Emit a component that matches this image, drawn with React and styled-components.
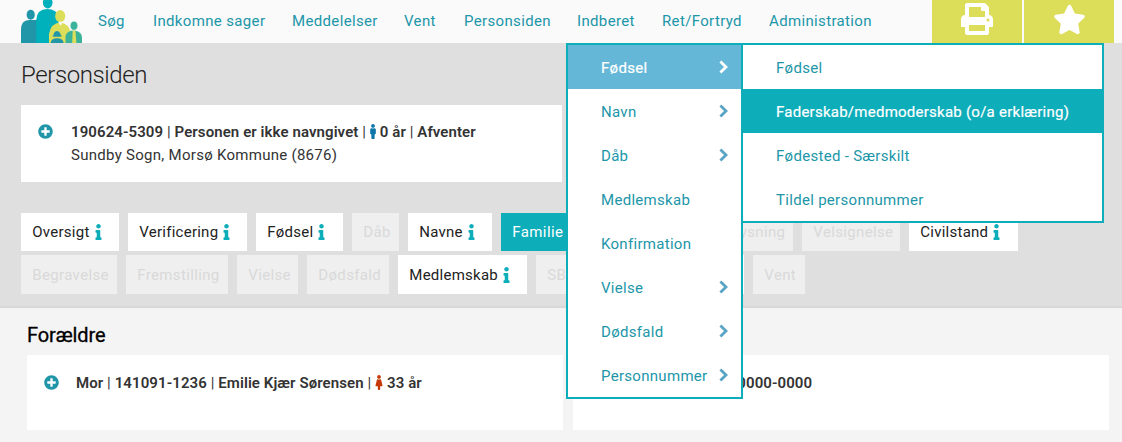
import React from "react";
import styled, { createGlobalStyle, css } from "styled-components";
import { FaInfo, FaMale, FaFemale, FaPlusCircle, FaPrint, FaStar } from "react-icons/fa";

const TEAL = "#0dadba";
const LINK = "#2196a9";

const GlobalStyle = createGlobalStyle`
  * {
    box-sizing: border-box;
  }
  body {
    margin: 0;
    background: #f4f4f4;
    color: #333;
    font-family: Roboto, "Liberation Sans", sans-serif;
    font-size: 15px;
    overflow: hidden;
  }
`;

const navItems = [
  { label: "Søg", width: 55 },
  { label: "Indkomne sager", width: 139 },
  { label: "Meddelelser", width: 112 },
  { label: "Vent", width: 60 },
  { label: "Personsiden", width: 113 },
  { label: "Indberet", width: 85 },
  { label: "Ret/Fortryd", width: 107 },
  { label: "Administration", width: 163 },
];

const menuItems = [
  { label: "Fødsel", sub: true, active: true },
  { label: "Navn", sub: true },
  { label: "Dåb", sub: true },
  { label: "Medlemskab" },
  { label: "Konfirmation" },
  { label: "Vielse", sub: true },
  { label: "Dødsfald", sub: true },
  { label: "Personnummer", sub: true },
];

const subItems = [
  { label: "Fødsel" },
  { label: "Faderskab/medmoderskab (o/a erklæring)", active: true },
  { label: "Fødested - Særskilt" },
  { label: "Tildel personnummer" },
];

const tabRows = [
  [
    { label: "Oversigt", width: 98, info: true },
    { label: "Verificering", width: 119, info: true },
    { label: "Fødsel", width: 87, info: true },
    { label: "Dåb", width: 47, disabled: true },
    { label: "Navne", width: 84, info: true },
    { label: "Familie", width: 87, info: true, active: true },
    { label: "", width: 115, disabled: true },
    { label: "Lysning", width: 72, disabled: true },
    { label: "Velsignelse", width: 98, disabled: true },
    { label: "Civilstand", width: 109, info: true },
  ],
  [
    { label: "Begravelse", width: 96, disabled: true },
    { label: "Fremstilling", width: 102, disabled: true },
    { label: "Vielse", width: 61, disabled: true },
    { label: "Dødsfald", width: 82, disabled: true },
    { label: "Medlemskab", width: 129, info: true },
    { label: "SB", width: 90, disabled: true },
    { label: "", width: 109 },
    { label: "Vent", width: 52, disabled: true },
  ],
];

function Logo() {
  return (
    <LogoSvg viewBox="0 0 61 43">
      <ellipse cx="9.7" cy="14.8" rx="4.1" ry="5" fill="#2196a9" />
      <path d="M0 43V30Q0 20 8 20H16V43Z" fill="#2196a9" />
      <ellipse cx="26.7" cy="2.6" rx="4.8" ry="6" fill="#00b0bb" />
      <path d="M15.2 43V20Q16 9 26 9Q36 9 38.5 18V43Z" fill="#00b0bb" />
      <path d="M28 43V34Q30 23 39 22.5Q48 23 50 34V43Z" fill="#dcdd58" />
      <ellipse cx="39.2" cy="16.2" rx="5" ry="6.2" fill="#dcdd58" />
      <path d="M37 21.8h5l-2.3 4z" fill="#fafafa" />
      <path d="M44.5 43V36Q46 30.5 53 30.5Q61 31 61 38V43Z" fill="#3bb39b" />
      <path d="M51.7 30.5h2.7l1 12.5h-4.2z" fill="#dcdd58" />
      <ellipse cx="53" cy="25.7" rx="3.8" ry="4.5" fill="#3bb39b" stroke="#fafafa" strokeWidth=".5" />
      <path d="M29.6 43Q30 38.5 36 38.3Q42.5 38.5 42.6 43Z" fill="#2196a9" />
      <path d="M31 36.2Q33 35.8 32.8 33.5Q33.5 31 36 31Q38.7 31 39.3 33.5Q39.5 35.8 41.3 36.2Q36 37.5 31 36.2Z" fill="#2196a9" />
    </LogoSvg>
  );
}

function Chevron() {
  return (
    <ChevronSvg viewBox="0 0 9 14">
      <path d="M1.4 1.5L7 7L1.4 12.5" fill="none" stroke="currentColor" strokeWidth="2.8" />
    </ChevronSvg>
  );
}

function App() {
  return (
    <Page>
      <GlobalStyle />
      <TopBar>
        <Logo />
        <Nav>
          {navItems.map((item) => (
            <NavItem key={item.label} $width={item.width}>
              {item.label}
            </NavItem>
          ))}
        </Nav>
        <ActionButton aria-label="Print">
          <FaPrint size={32} />
        </ActionButton>
        <ActionButton aria-label="Favorit">
          <FaStar size={33} />
        </ActionButton>
      </TopBar>

      <Dropdown>
        <Menu>
          {menuItems.map((item) => (
            <MenuItem key={item.label} $active={item.active}>
              {item.label}
              {item.sub && <Chevron />}
            </MenuItem>
          ))}
        </Menu>
        <SubMenu>
          {subItems.map((item) => (
            <SubMenuItem key={item.label} $active={item.active}>
              {item.label}
            </SubMenuItem>
          ))}
        </SubMenu>
      </Dropdown>

      <PersonHeader>
        <Title>Personsiden</Title>
        <PersonCard>
          <ExpandIcon />
          <PersonText>
            <PersonLine>
              <b>190624-5309</b> | <b>Personen er ikke navngivet</b> | <MaleIcon />
              <b>0 år</b> | <b>Afventer</b>
            </PersonLine>
            <Parish>Sundby Sogn, Morsø Kommune (8676)</Parish>
          </PersonText>
        </PersonCard>
        <Tabs>
          {tabRows.map((row, i) => (
            <TabRow key={i} $height={i === 0 ? 38 : 39}>
              {row.map((tab, j) => (
                <Tab key={j} $width={tab.width} $disabled={tab.disabled} $active={tab.active}>
                  {tab.label}
                  {tab.info && <InfoIcon />}
                </Tab>
              ))}
            </TabRow>
          ))}
        </Tabs>
      </PersonHeader>

      <Parents>
        <SectionTitle>Forældre</SectionTitle>
        <ParentGrid>
          <ParentCard>
            <ExpandIcon />
            <ParentLine>
              <b>Mor</b> | <b>141091-1236</b> | <b>Emilie Kjær Sørensen</b> | <FemaleIcon />
              <b>33 år</b>
            </ParentLine>
          </ParentCard>
          <ParentCard>
            <ExpandIcon />
            <ParentLine $indent={98}>
              <b>000000-0000</b>
            </ParentLine>
          </ParentCard>
        </ParentGrid>
      </Parents>
    </Page>
  );
}

const Page = styled.div`
  position: relative;
  width: 1122px;
  height: 442px;
  overflow: hidden;
`;

const TopBar = styled.header`
  display: flex;
  height: 43px;
  padding-left: 21px;
  background: #fafafa;
`;

const LogoSvg = styled.svg`
  width: 61px;
  height: 43px;
  flex: none;
`;

const Nav = styled.nav`
  display: flex;
  margin-left: 16px;
`;

const NavItem = styled.a`
  width: ${(p) => p.$width}px;
  line-height: 42px;
  color: ${LINK};
  letter-spacing: 0.35px;
  white-space: nowrap;
`;

const ActionButton = styled.button`
  display: flex;
  justify-content: center;
  width: 90px;
  height: 43px;
  margin: 0 2px 0 0;
  padding: 3px 0 0;
  border: 0;
  background: #dcdd58;
  color: #fff;
  flex: none;
`;

const Dropdown = styled.div`
  position: absolute;
  z-index: 2;
  top: 43px;
  left: 566px;
  display: flex;
  align-items: flex-start;
`;

const Menu = styled.div`
  width: 177px;
  border: 2px solid ${TEAL};
  background: #fff;
`;

const SubMenu = styled(Menu)`
  width: 363px;
  margin-left: -2px;
`;

const ChevronSvg = styled.svg`
  width: 9px;
  height: 14px;
  margin-top: -3px;
  color: #5aa5c5;
`;

const MenuItem = styled.div`
  display: flex;
  align-items: center;
  justify-content: space-between;
  height: 44px;
  padding: 2px 13px 0 33px;
  color: ${LINK};
  letter-spacing: 0.3px;
  white-space: nowrap;
  ${(p) =>
    p.$active &&
    css`
      background: #64b7d7;
      color: #fff;
      -webkit-text-stroke: 0.2px #fff;

      ${ChevronSvg} {
        color: #fff;
      }
    `}
`;

const SubMenuItem = styled(MenuItem)`
  ${(p) =>
    p.$active &&
    css`
      background: ${TEAL};
      letter-spacing: 0.25px;
    `}
`;

const PersonHeader = styled.section`
  height: 265px;
  padding: 16px 0 0 21px;
  border-bottom: 2px solid #d8d8d8;
  background: #dfdfdf;
`;

const Title = styled.h1`
  height: 46px;
  margin: 0;
  color: #222;
  font-size: 24px;
  font-weight: 300;
  letter-spacing: -0.4px;
  line-height: 32px;
`;

const PersonCard = styled.div`
  display: flex;
  width: 541px;
  height: 77px;
  padding: 15px 17px;
  background: #fff;
`;

const PersonText = styled.div`
  padding: 1px 0 0 1px;
`;

const ExpandIcon = styled(FaPlusCircle)`
  width: 15px;
  height: 15px;
  margin: 4px 17px 0 0;
  flex: none;
  color: ${LINK};
`;

const PersonLine = styled.div`
  letter-spacing: 0.09px;
  line-height: 23px;
  white-space: nowrap;

  b {
    font-weight: 600;
  }
`;

const ParentLine = styled(PersonLine)`
  padding: 1px 0 0 ${(p) => p.$indent || 0}px;
`;

const Parish = styled.div`
  line-height: 23px;
  letter-spacing: 0.28px;
`;

const MaleIcon = styled(FaMale)`
  width: 6px;
  height: 15px;
  margin-right: 4px;
  vertical-align: -2px;
  color: #0d76a8;
`;

const FemaleIcon = styled(FaFemale)`
  width: 8px;
  height: 15px;
  margin-right: 4px;
  vertical-align: -2px;
  color: #c63a0a;
`;

const Tabs = styled.div`
  display: grid;
  gap: 4px;
  margin-top: 31px;
`;

const TabRow = styled.div`
  display: flex;
  gap: 9px;
  height: ${(p) => p.$height}px;
`;

const Tab = styled.div`
  display: flex;
  align-items: center;
  width: ${(p) => p.$width}px;
  padding-left: 11.3px;
  overflow: hidden;
  background: #fff;
  color: #222;
  letter-spacing: 0.25px;
  white-space: nowrap;
  flex: none;
  ${(p) =>
    p.$disabled &&
    css`
      background: #efefef;
      color: #d9d9d9;
      letter-spacing: 0.35px;
    `}
  ${(p) =>
    p.$active &&
    css`
      background: ${TEAL};
      color: #fff;
      letter-spacing: 0.4px;
    `}
`;

const InfoIcon = styled(FaInfo)`
  width: 7px;
  height: 16px;
  margin-left: 5px;
  color: ${TEAL};
`;

const Parents = styled.section`
  padding: 14px 13px 0 27px;
`;

const SectionTitle = styled.h2`
  height: 33px;
  margin: 0;
  color: #000;
  font-size: 20px;
  font-weight: 400;
  letter-spacing: -0.1px;
  line-height: 26px;
  -webkit-text-stroke: 0.3px #000;
`;

const ParentGrid = styled.div`
  display: grid;
  grid-template-columns: 536px 536px;
  gap: 10px;
`;

const ParentCard = styled.div`
  display: flex;
  height: 75px;
  padding: 16px 17px;
  background: #fff;
`;

export default App;
